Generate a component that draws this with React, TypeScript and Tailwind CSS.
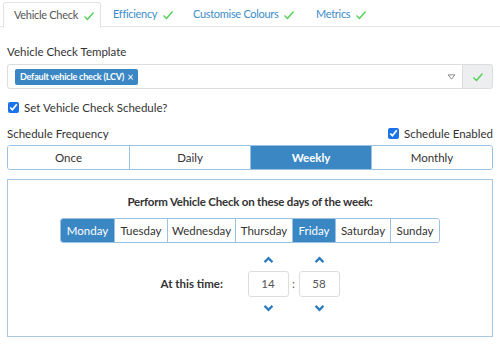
import { useState } from 'react';

const tabs = [
  { name: 'Vehicle Check', w: 'w-[98px]' },
  { name: 'Efficiency', w: 'w-[80px]' },
  { name: 'Customise Colours', w: 'w-[123px]' },
  { name: 'Metrics', w: 'w-[80px]' },
];
const freqs = ['Once', 'Daily', 'Weekly', 'Monthly'];
const days = [
  { name: 'Monday', w: 'w-[53px]' },
  { name: 'Tuesday', w: 'w-[53px]' },
  { name: 'Wednesday', w: 'w-[68px]' },
  { name: 'Thursday', w: 'w-[57px]' },
  { name: 'Friday', w: 'w-[43px]' },
  { name: 'Saturday', w: 'w-[55px]' },
  { name: 'Sunday', w: 'w-[49px]' },
];

function Check({ className = '' }: { className?: string }) {
  return (
    <svg viewBox="0 0 12 12" className={`w-[12px] h-[12px] shrink-0 ${className}`} fill="none" stroke="currentColor" strokeWidth="1.3">
      <path d="M1.5 6.5 L4.5 9.5 L10.5 2.5" />
    </svg>
  );
}

function Chevron({ up }: { up?: boolean }) {
  return (
    <svg viewBox="0 0 12 8" className="w-[11px] h-[7px] text-[#2e7bbf]" fill="none" stroke="currentColor" strokeWidth="2.6">
      <path d={up ? 'M1.5 7 L6 2.5 L10.5 7' : 'M1.5 1 L6 5.5 L10.5 1'} />
    </svg>
  );
}

function TimeBox({ value }: { value: string }) {
  return (
    <div className="flex flex-col items-center gap-[8px]">
      <Chevron up />
      <div className="w-[41px] h-[26px] border border-[#ddd] rounded-[3px] flex items-center justify-center text-[#555]">{value}</div>
      <Chevron />
    </div>
  );
}

export default function App() {
  const [freq, setFreq] = useState('Weekly');
  const [selectedDays, setSelectedDays] = useState(['Monday', 'Friday']);

  const toggleDay = (d: string) =>
    setSelectedDays(prev => (prev.includes(d) ? prev.filter(x => x !== d) : [...prev, d]));

  return (
    <div className="w-[500px] h-[349px] bg-white text-[#333] text-[11.5px] font-['Lato',sans-serif] overflow-hidden">
      {/* tabs */}
      <div className="flex pl-[3px] pt-[2px] border-b border-[#e6e6e6] h-[27px] whitespace-nowrap text-[11px] tracking-[-0.3px]">
        {tabs.map((t, i) => (
          <div
            key={t.name}
            className={`${t.w} shrink-0 flex items-center gap-[5px] ${
              i === 0
                ? 'pl-[10px] bg-white border border-b-0 border-[#e3e3e3] rounded-t-[3px] text-[#555] -mb-px h-[26px]'
                : 'pl-[12px] text-[#3c8dcb] h-[25px]'
            }`}
          >
            {t.name}
            <Check className="text-[#4cd04c]" />
          </div>
        ))}
      </div>

      <div className="px-[7px] pt-[17px]">
        <div className="leading-[15px]">Vehicle Check Template</div>
        <div className="flex mt-[5px] h-[25px]">
          <div className="flex-1 flex items-center border border-[#ddd] rounded-l-[3px] pl-[7px] pr-[6px]">
            <span className="flex items-center gap-[3px] bg-[#3a87c4] text-white font-bold text-[9px] tracking-[-0.2px] rounded-[2px] px-[5px] h-[16px]">
              Default vehicle check (LCV)
              <span className="font-normal text-[11px] leading-none">×</span>
            </span>
            <svg viewBox="0 0 10 7" className="ml-auto w-[9px] h-[6px] text-[#777]" fill="none" stroke="currentColor" strokeWidth="1">
              <path d="M1 1 H9 L5 6 Z" />
            </svg>
          </div>
          <div className="w-[30px] flex items-center justify-center bg-[#eceeef] border border-l-0 border-[#ddd] rounded-r-[3px]">
            <Check className="text-[#4cd04c]" />
          </div>
        </div>

        <label className="flex items-center gap-[5px] mt-[11px] leading-[15px]">
          <input type="checkbox" defaultChecked className="w-[11px] h-[11px] accent-[#1a73e8] ml-[1px]" />
          Set Vehicle Check Schedule?
        </label>

        <div className="flex items-end justify-between mt-[11px] leading-[15px]">
          <span>Schedule Frequency</span>
          <label className="flex items-center gap-[5px]">
            <input type="checkbox" defaultChecked className="w-[11px] h-[11px] accent-[#1a73e8]" />
            Schedule Enabled
          </label>
        </div>

        <div className="grid grid-cols-4 mt-[4px] border border-[#9cc2e3] rounded-[3px] overflow-hidden h-[25px]">
          {freqs.map((f, i) => (
            <button
              key={f}
              onClick={() => setFreq(f)}
              className={`${i > 0 ? 'border-l border-[#9cc2e3]' : ''} ${
                freq === f ? 'bg-[#3a87c4] text-white font-bold' : 'bg-white text-[#333]'
              }`}
            >
              {f}
            </button>
          ))}
        </div>

        <div className="mt-[9px] border border-[#a9c9e3] h-[158px] flex flex-col items-center">
          <div className="font-bold mt-[14px] leading-[15px] tracking-[-0.2px]">Perform Vehicle Check on these days of the week:</div>
          <div className="flex mt-[9px] h-[25px] border border-[#9cc2e3] rounded-[3px] overflow-hidden">
            {days.map((d, i) => (
              <button
                key={d.name}
                onClick={() => toggleDay(d.name)}
                className={`${d.w} ${i > 0 ? 'border-l border-[#9cc2e3]' : ''} ${
                  selectedDays.includes(d.name) ? 'bg-[#3a87c4] text-white' : 'bg-white text-[#333]'
                }`}
              >
                {d.name}
              </button>
            ))}
          </div>

          <div className="flex items-center mt-[13px]">
            <span className="font-bold w-[87px]">At this time:</span>
            <TimeBox value="14" />
            <span className="w-[10px] text-center text-[#555]">:</span>
            <TimeBox value="58" />
          </div>
        </div>
      </div>
    </div>
  );
}
